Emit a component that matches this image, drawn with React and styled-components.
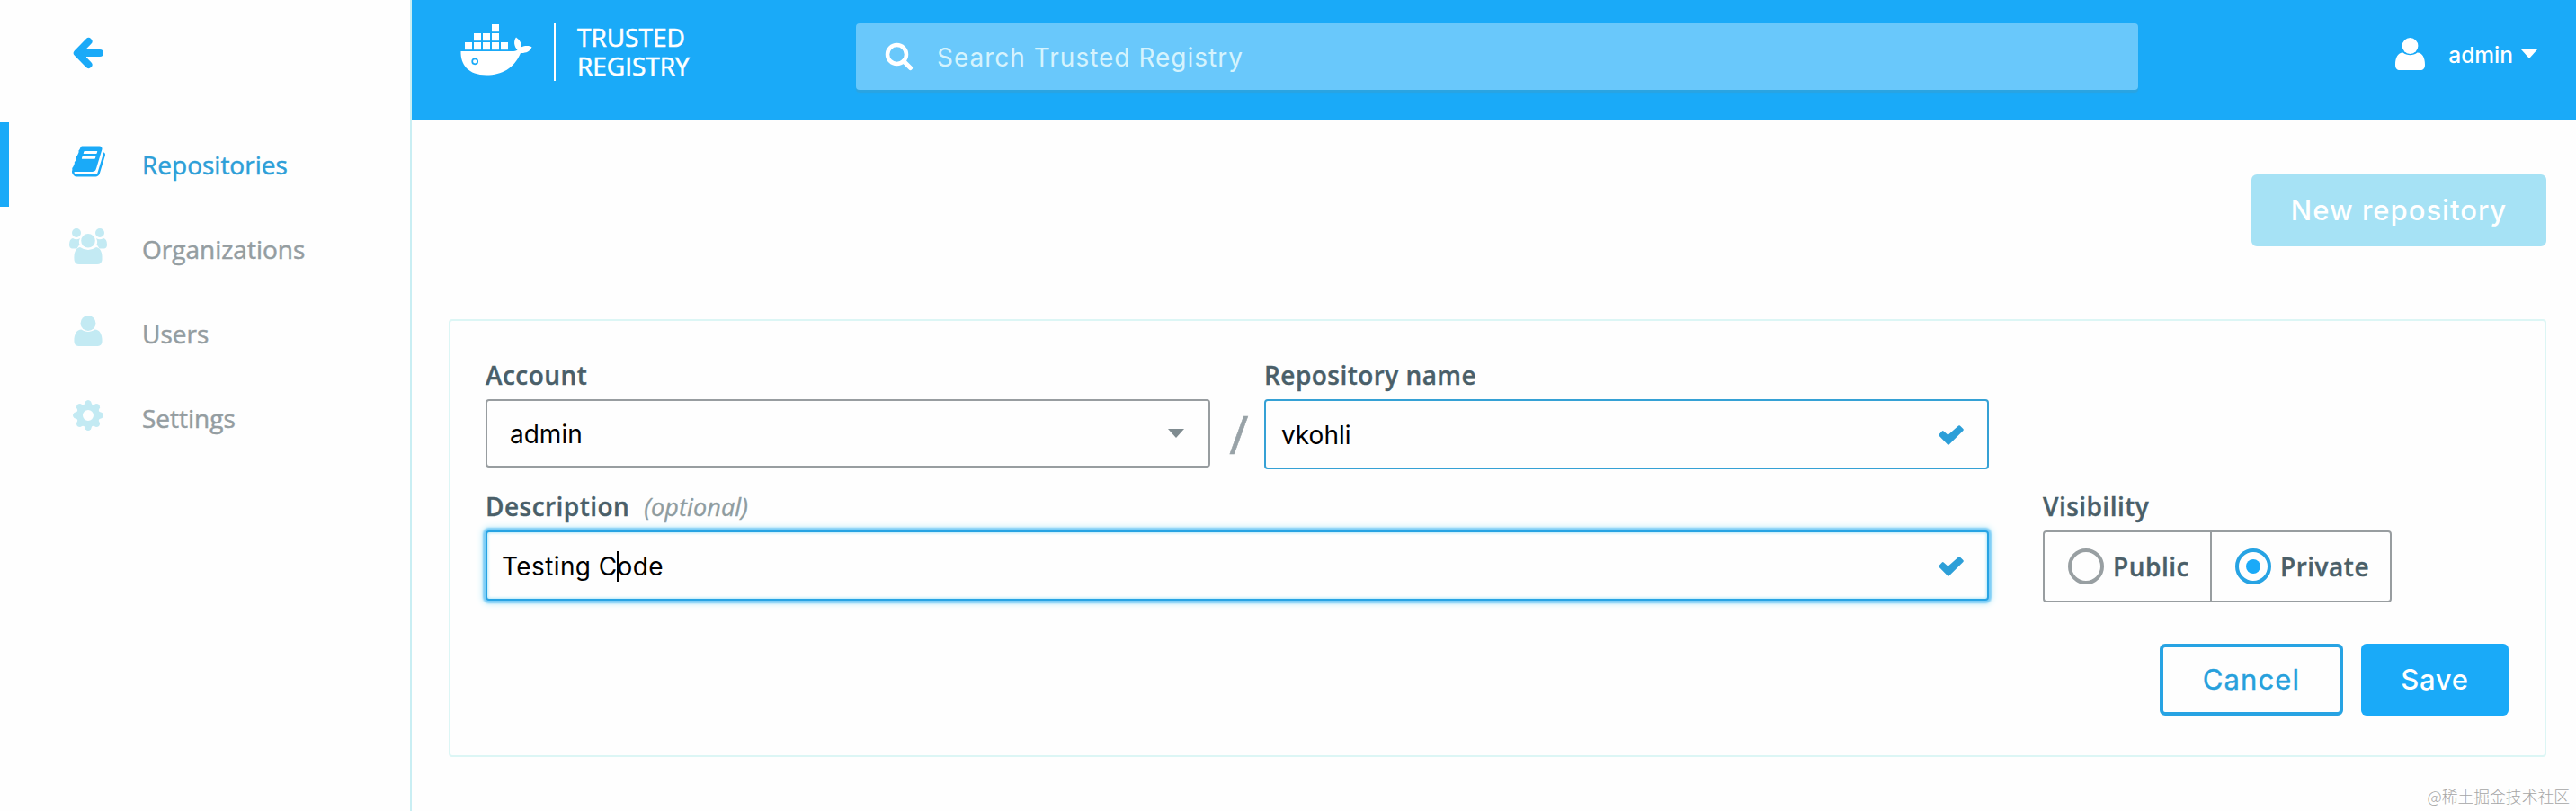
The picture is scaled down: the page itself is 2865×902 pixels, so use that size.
import React from "react";
import styled, { createGlobalStyle, css } from "styled-components";

const blue = "#1aaaf8";
const linkBlue = "#2d9fd8";
const slate = "#4a5f69";
const grey = "#949da1";
const openSans = `"Open Sans", "Noto Sans", sans-serif`;
const inter = `Inter, "Liberation Sans", sans-serif`;

const GlobalStyle = createGlobalStyle`
  * { box-sizing: border-box; }
  body { margin: 0; background: #fefefe; font-family: ${openSans}; }
  svg { display: block; flex: none; }
`;

const Page = styled.div`
  position: relative;
  display: flex;
  width: 2865px;
  height: 902px;
  overflow: hidden;
`;

const Sidebar = styled.nav`
  display: flex;
  flex-direction: column;
  width: 458px;
  border-right: 2px solid #c9eef3;
`;

const BackButton = styled.div`
  height: 136px;
  padding: 41px 0 0 81px;
  color: ${blue};
`;

const NavItem = styled.a`
  display: flex;
  align-items: center;
  gap: 38px;
  height: 94px;
  padding-left: 66px;
  border-left: 10px solid ${(p) => (p.$active ? blue : "transparent")};
  color: ${(p) => (p.$active ? linkBlue : grey)};
  font-size: 28px;
  line-height: 38px;
  -webkit-text-stroke: 0.5px currentColor;
`;

const NavIcon = styled.span`
  display: flex;
  justify-content: center;
  width: 44px;
  margin-bottom: 7px;
  color: ${(p) => (p.$active ? blue : "#c3eaf3")};
`;

const Content = styled.div`
  display: flex;
  flex-direction: column;
  width: 2407px;
`;

const Header = styled.header`
  display: flex;
  align-items: flex-start;
  height: 134px;
  padding: 26px 43px 0 54px;
  background: ${blue};
  color: #fff;
`;

const Brand = styled.div`
  display: flex;
  gap: 24px;
  width: 440px;
`;

const BrandDivider = styled.span`
  width: 2px;
  height: 64px;
  background: #fff;
`;

const BrandName = styled.div`
  margin-top: -1px;
  font-size: 28px;
  line-height: 32px;
  -webkit-text-stroke: 0.6px currentColor;
`;

const SearchBox = styled.div`
  display: flex;
  align-items: center;
  gap: 26px;
  width: 1426px;
  height: 74px;
  padding-left: 32px;
  border-radius: 4px;
  background: #69c8fb;
  box-shadow: 0 3px 1px #2aa4e2;
`;

const Placeholder = styled.span`
  padding-top: 2px;
  color: #d5f3fd;
  font: 400 28px/36px ${inter};
  letter-spacing: 1px;
`;

const UserMenu = styled.div`
  display: flex;
  align-items: center;
  height: 68px;
  margin-left: auto;
  font: 500 24.5px/32px ${inter};
`;

const UserName = styled.span`
  margin: 2px 9px 0 26px;
`;

const Caret = styled.span`
  width: 0;
  height: 0;
  border: 9px solid transparent;
  border-top: 10px solid ${(p) => p.$color};
  border-bottom: 0;
`;

const Main = styled.main`
  display: flex;
  flex-direction: column;
  padding: 60px 33px 0 41px;
`;

const variants = {
  primary: css`background: ${blue}; color: #fff;`,
  faded: css`background: #a6e2f5; color: #fff;`,
  outline: css`
    border: 4px solid #27a3e3;
    color: #27a0dc;
    font-weight: 400;
    -webkit-text-stroke: 0.4px currentColor;
  `,
};

const Button = styled.div`
  display: flex;
  align-items: center;
  justify-content: center;
  width: ${(p) => p.$width}px;
  height: 80px;
  border-radius: 6px;
  font: 500 31px/40px ${inter};
  letter-spacing: ${(p) => p.$spacing || 0}px;
  ${(p) => variants[p.$variant]}
`;

const Toolbar = styled.div`
  display: flex;
  justify-content: flex-end;
  margin-bottom: 81px;
`;

const Panel = styled.section`
  display: flex;
  flex-direction: column;
  height: 487px;
  padding: 41px 40px 0 39px;
  border: 2px solid #dcf6f5;
  border-radius: 4px;
`;

const FormRow = styled.div`
  display: flex;
  margin-bottom: ${(p) => p.$after}px;
`;

const Field = styled.div`
  display: flex;
  flex-direction: column;
  width: ${(p) => p.$width}px;
`;

const Label = styled.div`
  height: 38px;
  margin-bottom: 8px;
  color: ${slate};
  font-size: 28px;
  font-weight: 600;
  line-height: 38px;
  letter-spacing: 0.45px;
  white-space: pre;
  -webkit-text-stroke: 0.35px currentColor;
`;

const Hint = styled.em`
  margin-left: 16px;
  color: #8f9ca0;
  font-size: 27px;
  font-weight: 400;
  letter-spacing: 0.1px;
`;

const boxes = {
  select: css`height: 76px; padding: 0 27px 0 25px; border-color: #989da0;`,
  valid: css`height: 78px; padding: 0 26px 0 17px; border-color: #35a1d5;`,
  focused: css`
    height: 78px;
    padding: 0 26px 0 16px;
    border-color: #27a3e3;
    box-shadow: 0 0 2px 3px #7dcdf6, 0 0 7px 4px #c8effa, inset 0 0 3px 1px #b5e8f8;
  `,
};

const InputBox = styled.div`
  display: flex;
  align-items: center;
  justify-content: space-between;
  border: 2px solid;
  border-radius: 4px;
  background: #fefefe;
  ${(p) => boxes[p.$kind]}
`;

const Value = styled.span`
  display: flex;
  align-items: center;
  padding-top: 2px;
  color: #000;
  font: 400 28px/36px ${inter};
  letter-spacing: ${(p) => p.$spacing || 0}px;
`;

const TextCursor = styled.span`
  width: 2px;
  height: 34px;
  margin: 0 -1px;
  background: #000;
`;

const Slash = styled.div`
  width: 60px;
  padding: 46px 0 0 4px;
  color: #98a2a7;
  font-size: 58px;
  line-height: 78px;
  text-align: center;
  -webkit-text-stroke: 0.6px currentColor;
`;

const RadioGroup = styled.div`
  display: flex;
  height: 80px;
  border: 2px solid #989da0;
  border-radius: 4px;
`;

const RadioOption = styled.div`
  display: flex;
  align-items: center;
  gap: 10px;
  width: ${(p) => p.$width}px;
  padding-left: 26px;
  color: ${slate};
  font-size: 28px;
  font-weight: 600;
  letter-spacing: 0.5px;
  -webkit-text-stroke: 0.35px currentColor;
  & + & {
    border-left: 2px solid #989da0;
  }
`;

const Radio = styled.span`
  display: flex;
  align-items: center;
  justify-content: center;
  width: 40px;
  height: 40px;
  border: 4px solid ${(p) => (p.$checked ? "#27a3e3" : "#989fa2")};
  border-radius: 50%;
  &::after {
    content: "";
    width: 16px;
    height: 16px;
    border-radius: 50%;
    background: ${(p) => (p.$checked ? blue : "transparent")};
  }
`;

const Actions = styled.div`
  display: flex;
  justify-content: flex-end;
  gap: 20px;
`;

const Watermark = styled.div`
  position: absolute;
  right: 7px;
  bottom: 4px;
  color: #a6a6a6;
  font: 300 17.8px/26px "Noto Sans CJK SC", sans-serif;
`;

const ArrowIcon = () => (
  <svg width="34" height="36" viewBox="0 0 34 36" fill="none" stroke="currentColor" strokeWidth="8" strokeLinecap="round" strokeLinejoin="round">
    <path d="M17.5 5 L4.8 18 L17.5 31" />
    <path d="M8 18 H30" />
    <path d="M8 18 L14 12 V24 Z" strokeWidth="2" fill="currentColor" />
  </svg>
);

const BookIcon = () => (
  <svg width="37" height="35" viewBox="0 128 1664 1536" fill="currentColor">
    <path d="M1639 478q40 57 18 129l-275 906q-19 64-76.500 107.500t-122.500 43.500h-923q-77 0-148.500-53.500t-99.500-131.500q-24-67-2-127 0-4 3-27t4-37q1-8-3-21.500t-3-19.500q2-11 8-21t16.500-23.500 16.500-23.500q23-38 45-91.500t30-91.500q3-10 .5-30t-.5-28q3-11 17-28t17-23q21-36 42-92t25-90q1-9-2.500-32t.5-28q4-13 22-30.500t22-22.500q19-26 42.500-84.500t27.500-96.500q1-8-3-25.500t-2-26.500q2-8 9-18t18-23 17-21q8-12 16.500-30.500t15-35 16-36 19.500-32 26.500-23.500 36-11.500 47.500 5.500l-1 3q38-9 51-9h761q74 0 114 56t18 130l-274 906q-36 119-71.500 153.500t-128.500 34.500h-869q-27 0-38 15-11 16-1 43 24 70 144 70h923q29 0 56-15.500t35-41.500l300-987q7-22 5-57 38 15 59 43zm-1064 2q-4 13 2 22.500t20 9.500h608q13 0 25.500-9.500t16.500-22.500l21-64q4-13-2-22.500t-20-9.500h-608q-13 0-25.500 9.500t-16.500 22.500zm-83 256q-4 13 2 22.500t20 9.500h608q13 0 25.500-9.500t16.500-22.500l21-64q4-13-2-22.500t-20-9.500h-608q-13 0-25.500 9.500t-16.500 22.500z" />
  </svg>
);

const PersonIcon = ({ width = 33, height = 36 }) => (
  <svg width={width} height={height} viewBox="0 0 33 36" fill="currentColor">
    <circle cx="16.500" cy="9" r="8.900" />
    <path d="M8.500 16.500 C13 20 20 20 24.500 16.500 C30 16.500 33 22 33 30 C33 34 31 36 28 36 H5 C2 36 0 34 0 30 C0 22 3 16.500 8.500 16.500Z" />
  </svg>
);

const GroupIcon = () => (
  <svg width="42" height="40" viewBox="0 0 42 40" fill="currentColor">
    <circle cx="8" cy="5" r="5" />
    <circle cx="34" cy="5" r="5" />
    <path d="M4 11 Q8 13.500 12 11 Q10 15 11.500 18 Q10 20 8.500 22.500 H3 Q0 22 0 18 Q0 12 4 11Z" />
    <path d="M38 11 Q34 13.500 30 11 Q32 15 30.500 18 Q32 20 33.500 22.500 H39 Q42 22 42 18 Q42 12 38 11Z" />
    <circle cx="21" cy="13.800" r="7.800" />
    <path d="M12 21 Q21 27 30 21 C35 22 37 27 36.500 35 Q36 40 31 40 H11 Q6 40 5.500 35 C5 27 7 22 12 21Z" />
  </svg>
);

const GearIcon = () => (
  <svg width="34" height="34" viewBox="-17 -17 34 34" fill="currentColor">
    {[0, 45, 90, 135, 180, 225, 270, 315].map((angle) => (
      <path key={angle} transform={`rotate(${angle})`} d="M-5 -10 L-3 -15.500 Q0 -18.500 3 -15.500 L5 -10Z" />
    ))}
    <circle r="9.500" fill="none" stroke="currentColor" strokeWidth="7" />
  </svg>
);

const crates = [[35, 0], [15, 10], [25, 10], [35, 10], [5, 20], [15, 20], [25, 20], [35, 20], [45, 20]];

const WhaleLogo = () => (
  <svg width="80" height="58" viewBox="0 -1 80 58" fill="#fff">
    {crates.map(([x, y]) => (
      <rect key={`${x}-${y}`} x={x} y={y} width="8" height="8.200" />
    ))}
    <path d="M.5 30 H57 C60 30 62 29.500 63.500 28.500 C59.500 24.500 59 18.500 62 14.500 C66 17.500 68.300 21 68 25.300 C71.500 23.600 76.500 23.600 79.500 25.300 C77.500 30.500 73 32.200 67 32 C60 49 46 56.500 29 56.500 C9 56.500 0 45 .5 30Z" />
    <circle cx="16.200" cy="41.300" r="3" stroke={blue} strokeWidth="1.700" />
  </svg>
);

const SearchIcon = () => (
  <svg width="32" height="32" viewBox="0 0 32 32" fill="none" stroke="#fff">
    <circle cx="13.500" cy="13.500" r="10.500" strokeWidth="4.500" />
    <path d="M21 21 L28.500 28.500" strokeWidth="5" strokeLinecap="round" />
  </svg>
);

const CheckIcon = () => (
  <svg width="28" height="24" viewBox="0 -2 28 24" fill="#2d9fd8" stroke="#2d9fd8" strokeWidth="2.500" strokeLinejoin="round">
    <path d="M1.500 10.800 L4.800 7.300 L10.500 12.500 L23 1.500 L26.500 5 L10.800 20.500Z" />
  </svg>
);

const navigation = [
  { label: "Repositories", icon: <BookIcon />, active: true },
  { label: "Organizations", icon: <GroupIcon /> },
  { label: "Users", icon: <PersonIcon width={32} height={34} /> },
  { label: "Settings", icon: <GearIcon /> },
];

export default function App() {
  return (
    <Page>
      <GlobalStyle />
      <Sidebar>
        <BackButton><ArrowIcon /></BackButton>
        {navigation.map(({ label, icon, active }) => (
          <NavItem key={label} $active={active}>
            <NavIcon $active={active}>{icon}</NavIcon>
            <span>{label}</span>
          </NavItem>
        ))}
      </Sidebar>
      <Content>
        <Header>
          <Brand>
            <WhaleLogo />
            <BrandDivider />
            <BrandName>TRUSTED<br />REGISTRY</BrandName>
          </Brand>
          <SearchBox>
            <SearchIcon />
            <Placeholder>Search Trusted Registry</Placeholder>
          </SearchBox>
          <UserMenu>
            <PersonIcon />
            <UserName>admin</UserName>
            <Caret $color="#fff" />
          </UserMenu>
        </Header>
        <Main>
          <Toolbar>
            <Button $variant="faded" $width={328} $spacing={1}>New repository</Button>
          </Toolbar>
          <Panel>
            <FormRow $after={22}>
              <Field $width={806}>
                <Label>Account</Label>
                <InputBox $kind="select">
                  <Value>admin</Value>
                  <Caret $color="#7f8b90" />
                </InputBox>
              </Field>
              <Slash>/</Slash>
              <Field $width={806}>
                <Label>Repository name</Label>
                <InputBox $kind="valid">
                  <Value>vkohli</Value>
                  <CheckIcon />
                </InputBox>
              </Field>
            </FormRow>
            <FormRow $after={46}>
              <Field $width={1732}>
                <Label>Description<Hint>(optional)</Hint></Label>
                <FormRow $after={0}>
                  <Field $width={1672}>
                    <InputBox $kind="focused">
                      <Value $spacing={0.4}>Testing C<TextCursor />ode</Value>
                      <CheckIcon />
                    </InputBox>
                  </Field>
                </FormRow>
              </Field>
              <Field $width={388}>
                <Label>Visibility</Label>
                <RadioGroup>
                  <RadioOption $width={184}><Radio />Public</RadioOption>
                  <RadioOption $width={200}><Radio $checked />Private</RadioOption>
                </RadioGroup>
              </Field>
            </FormRow>
            <Actions>
              <Button $variant="outline" $width={204} $spacing={1.1}>Cancel</Button>
              <Button $variant="primary" $width={164} $spacing={0.7}>Save</Button>
            </Actions>
          </Panel>
        </Main>
      </Content>
      <Watermark>@稀土掘金技术社区</Watermark>
    </Page>
  );
}
